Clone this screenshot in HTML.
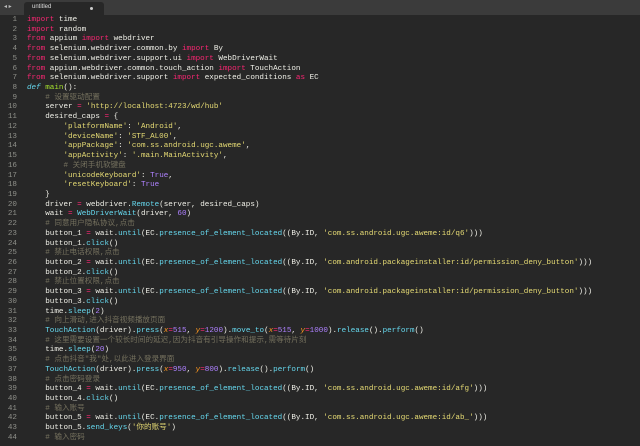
<!DOCTYPE html>
<html><head><meta charset="utf-8"><style>
html,body{margin:0;padding:0;width:640px;height:446px;overflow:hidden;background:#272727;}
.bar{position:absolute;left:0;top:0;width:640px;height:15px;background:#3b3b3b;}
.tab{position:absolute;left:24px;top:2px;width:80px;height:13px;background:#272727;border-radius:3px 3px 0 0;}
.tab span{position:absolute;left:8px;top:2px;font:6px "Liberation Sans",sans-serif;color:#ddd;}
.tab i{position:absolute;left:66px;top:5px;width:3px;height:3px;border-radius:2px;background:#ccc;}
.arr{position:absolute;left:4px;top:3px;font:6px "Liberation Sans",sans-serif;color:#bbb;}
pre{margin:0;position:absolute;top:16px;font-family:"Liberation Mono","Noto Sans CJK SC",monospace;font-size:7.6px;line-height:9.72px;color:#f0f0e8;}
.ln{left:0;width:17px;text-align:right;color:#8f908a;}
.code{left:27px;}
.k{color:#f92672}.s{color:#e6db74}.f{color:#66d9ef}.n{color:#ae81ff}.c{color:#75715e}.g{color:#a6e22e}.d{color:#66d9ef;font-style:italic}.p{color:#fd971f;font-style:italic}
</style></head><body>
<div class="bar"><div class="arr">◂ ▸</div><div class="tab"><span>untitled</span><i></i></div></div>
<pre class="ln">1
2
3
4
5
6
7
8
9
10
11
12
13
14
15
16
17
18
19
20
21
22
23
24
25
26
27
28
29
30
31
32
33
34
35
36
37
38
39
40
41
42
43
44</pre>
<pre class="code"><span class="k">import</span> time
<span class="k">import</span> random
<span class="k">from</span> appium <span class="k">import</span> webdriver
<span class="k">from</span> selenium.webdriver.common.by <span class="k">import</span> By
<span class="k">from</span> selenium.webdriver.support.ui <span class="k">import</span> WebDriverWait
<span class="k">from</span> appium.webdriver.common.touch_action <span class="k">import</span> TouchAction
<span class="k">from</span> selenium.webdriver.support <span class="k">import</span> expected_conditions <span class="k">as</span> EC
<span class="d">def</span> <span class="g">main</span>():
    <span class="c"># 设置驱动配置</span>
    server <span class="k">=</span> <span class="s">'http://localhost:4723/wd/hub'</span>
    desired_caps <span class="k">=</span> {
        <span class="s">'platformName'</span>: <span class="s">'Android'</span>,
        <span class="s">'deviceName'</span>: <span class="s">'STF_AL00'</span>,
        <span class="s">'appPackage'</span>: <span class="s">'com.ss.android.ugc.aweme'</span>,
        <span class="s">'appActivity'</span>: <span class="s">'.main.MainActivity'</span>,
        <span class="c"># 关闭手机软键盘</span>
        <span class="s">'unicodeKeyboard'</span>: <span class="n">True</span>,
        <span class="s">'resetKeyboard'</span>: <span class="n">True</span>
    }
    driver <span class="k">=</span> webdriver.<span class="f">Remote</span>(server, desired_caps)
    wait <span class="k">=</span> <span class="f">WebDriverWait</span>(driver, <span class="n">60</span>)
    <span class="c"># 同意用户隐私协议,点击</span>
    button_1 <span class="k">=</span> wait.<span class="f">until</span>(EC.<span class="f">presence_of_element_located</span>((By.ID, <span class="s">'com.ss.android.ugc.aweme:id/q6'</span>)))
    button_1.<span class="f">click</span>()
    <span class="c"># 禁止电话权限,点击</span>
    button_2 <span class="k">=</span> wait.<span class="f">until</span>(EC.<span class="f">presence_of_element_located</span>((By.ID, <span class="s">'com.android.packageinstaller:id/permission_deny_button'</span>)))
    button_2.<span class="f">click</span>()
    <span class="c"># 禁止位置权限,点击</span>
    button_3 <span class="k">=</span> wait.<span class="f">until</span>(EC.<span class="f">presence_of_element_located</span>((By.ID, <span class="s">'com.android.packageinstaller:id/permission_deny_button'</span>)))
    button_3.<span class="f">click</span>()
    time.<span class="f">sleep</span>(<span class="n">2</span>)
    <span class="c"># 向上滑动,进入抖音视频播放页面</span>
    <span class="f">TouchAction</span>(driver).<span class="f">press</span>(<span class="p">x</span><span class="k">=</span><span class="n">515</span>, <span class="p">y</span><span class="k">=</span><span class="n">1200</span>).<span class="f">move_to</span>(<span class="p">x</span><span class="k">=</span><span class="n">515</span>, <span class="p">y</span><span class="k">=</span><span class="n">1000</span>).<span class="f">release</span>().<span class="f">perform</span>()
    <span class="c"># 这里需要设置一个较长时间的延迟,因为抖音有引导操作和提示,需等待片刻</span>
    time.<span class="f">sleep</span>(<span class="n">20</span>)
    <span class="c"># 点击抖音"我"处,以此进入登录界面</span>
    <span class="f">TouchAction</span>(driver).<span class="f">press</span>(<span class="p">x</span><span class="k">=</span><span class="n">950</span>, <span class="p">y</span><span class="k">=</span><span class="n">800</span>).<span class="f">release</span>().<span class="f">perform</span>()
    <span class="c"># 点击密码登录</span>
    button_4 <span class="k">=</span> wait.<span class="f">until</span>(EC.<span class="f">presence_of_element_located</span>((By.ID, <span class="s">'com.ss.android.ugc.aweme:id/afg'</span>)))
    button_4.<span class="f">click</span>()
    <span class="c"># 输入账号</span>
    button_5 <span class="k">=</span> wait.<span class="f">until</span>(EC.<span class="f">presence_of_element_located</span>((By.ID, <span class="s">'com.ss.android.ugc.aweme:id/ab_'</span>)))
    button_5.<span class="f">send_keys</span>(<span class="s">'你的账号'</span>)
    <span class="c"># 输入密码</span></pre>
</body></html>
